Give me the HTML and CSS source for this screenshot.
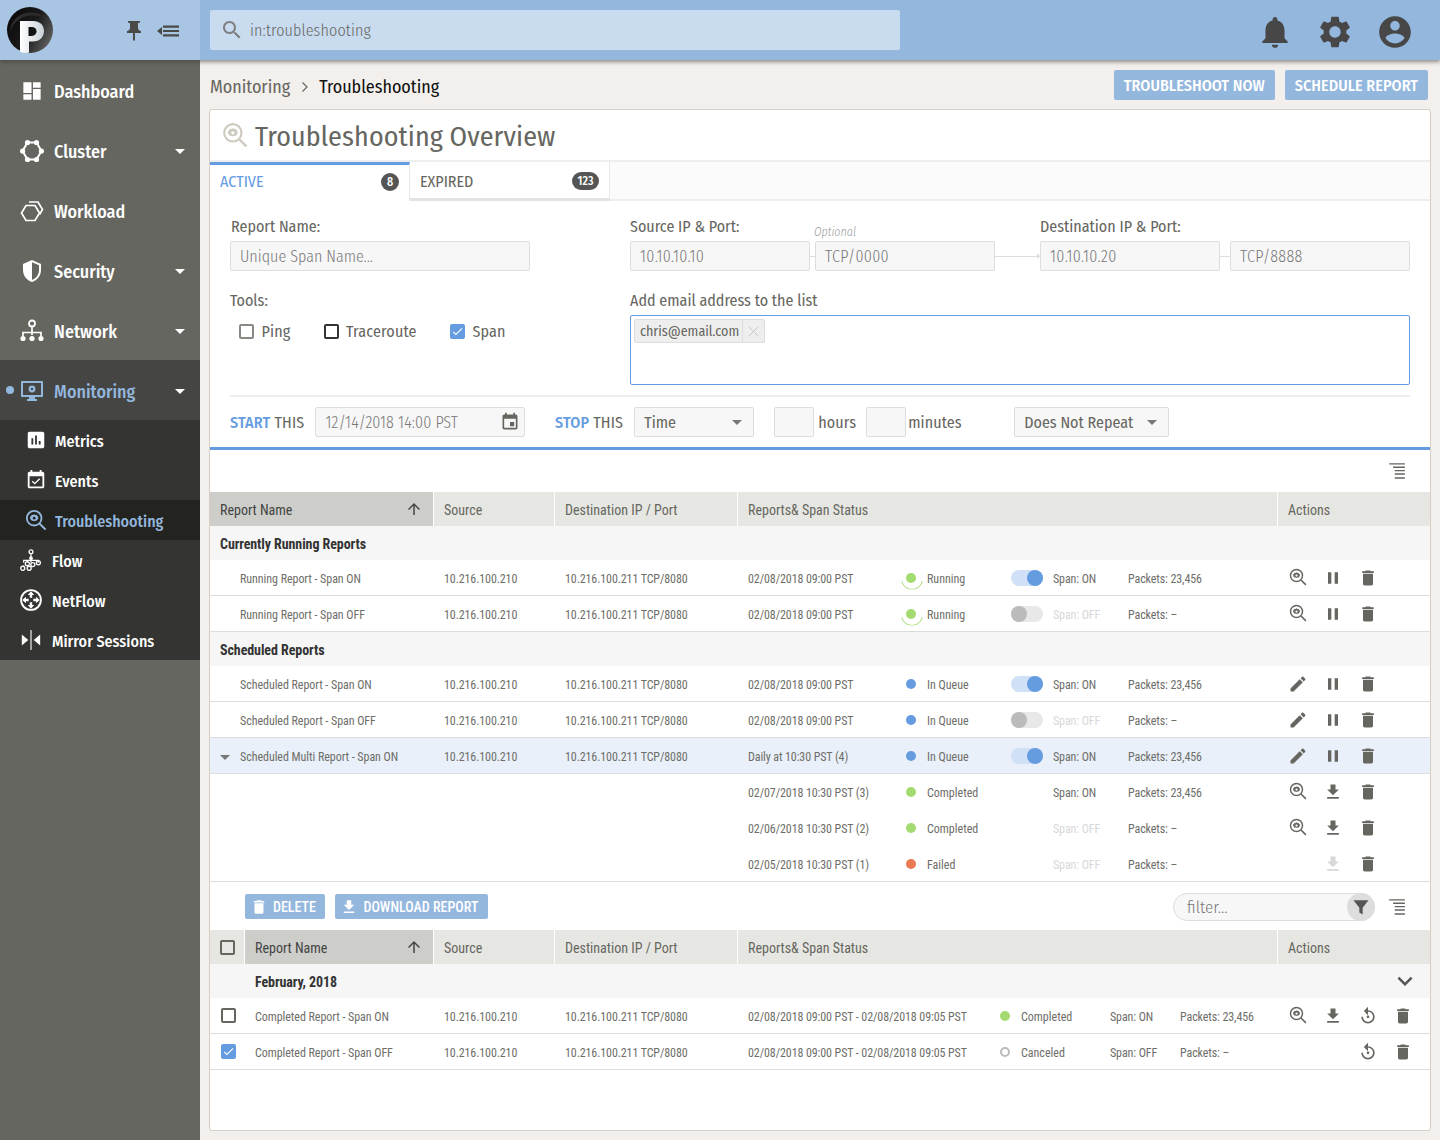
FILE: index.html
```html
<!DOCTYPE html>
<html lang="en">
<head>
<meta charset="utf-8">
<title>Troubleshooting Overview</title>
<link rel="stylesheet" href="styles.css">
</head>
<body>
<svg class="sprite" aria-hidden="true">
  <symbol id="i-pin" viewBox="0 0 24 24"><path d="M16 9V4h1c.55 0 1-.45 1-1s-.45-1-1-1H7c-.55 0-1 .45-1 1s.45 1 1 1h1v5c0 1.66-1.34 3-3 3v2h5.97v7l1 1 1-1v-7H19v-2c-1.66 0-3-1.34-3-3z"/></symbol>
  <symbol id="i-collapse" viewBox="0 0 24 24"><path d="M1 12l5-4v8zM7 6.500h16v2.200H7zM7 10.900h16v2.200H7zM7 15.300h16v2.200H7z"/></symbol>
  <symbol id="i-search" viewBox="0 0 24 24"><path d="M15.5 14h-.79l-.28-.27C15.41 12.59 16 11.11 16 9.5 16 5.91 13.09 3 9.5 3S3 5.91 3 9.5 5.91 16 9.5 16c1.61 0 3.09-.59 4.23-1.57l.27.28v.79l5 4.99L20.49 19l-4.99-5zm-6 0C7.01 14 5 11.99 5 9.5S7.01 5 9.5 5 14 7.01 14 9.5 11.99 14 9.5 14z"/></symbol>
  <symbol id="i-bell" viewBox="0 0 24 24"><path d="M12 22c1.1 0 2-.9 2-2h-4c0 1.1.89 2 2 2zm6-6v-5c0-3.07-1.64-5.64-4.5-6.32V4c0-.83-.67-1.5-1.5-1.5s-1.5.67-1.5 1.5v.68C7.63 5.36 6 7.92 6 11v5l-2 2v1h16v-1l-2-2z"/></symbol>
  <symbol id="i-gear" viewBox="0 0 24 24"><path d="M19.14 12.94c.04-.3.06-.61.06-.94 0-.32-.02-.64-.07-.94l2.03-1.58c.18-.14.23-.41.12-.61l-1.92-3.32c-.12-.22-.37-.29-.59-.22l-2.39.96c-.5-.38-1.03-.7-1.62-.94l-.36-2.54c-.04-.24-.24-.41-.48-.41h-3.84c-.24 0-.43.17-.47.41l-.36 2.54c-.59.24-1.13.57-1.62.94l-2.39-.96c-.22-.08-.47 0-.59.22L2.74 8.87c-.12.21-.08.47.12.61l2.03 1.58c-.05.3-.09.63-.09.94s.02.64.07.94l-2.03 1.58c-.18.14-.23.41-.12.61l1.92 3.32c.12.22.37.29.59.22l2.39-.96c.5.38 1.03.7 1.62.94l.36 2.54c.05.24.24.41.48.41h3.84c.24 0 .44-.17.47-.41l.36-2.54c.59-.24 1.13-.56 1.62-.94l2.39.96c.22.08.47 0 .59-.22l1.92-3.32c.12-.22.07-.47-.12-.61l-2.01-1.58zM12 15.6c-1.98 0-3.6-1.62-3.6-3.6s1.62-3.6 3.6-3.6 3.6 1.62 3.6 3.6-1.62 3.6-3.6 3.6z"/></symbol>
  <symbol id="i-account" viewBox="0 0 24 24"><path d="M12 2C6.48 2 2 6.48 2 12s4.48 10 10 10 10-4.48 10-10S17.52 2 12 2zm0 3c1.66 0 3 1.34 3 3s-1.34 3-3 3-3-1.34-3-3 1.34-3 3-3zm0 14.2c-2.5 0-4.71-1.28-6-3.22.03-1.99 4-3.08 6-3.08 1.99 0 5.97 1.09 6 3.08-1.29 1.94-3.5 3.22-6 3.22z"/></symbol>
  <symbol id="i-dashboard" viewBox="-2.500 -2.500 25 25"><path d="M1 1h8.500v11H1zM1 13.500h8.500V19H1zM11 1h8v5.500h-8zM11 8h8v11h-8z"/></symbol>
  <symbol id="i-cluster" viewBox="0 0 24 24"><path fill="none" stroke="currentColor" stroke-width="2" d="M7.500 3.500h9l5 8.500-5 8.500h-9L2.500 12z"/><circle cx="7.500" cy="3.500" r="2.600"/><circle cx="16.500" cy="3.500" r="2.600"/><circle cx="21.400" cy="12" r="2.600"/><circle cx="16.500" cy="20.500" r="2.600"/><circle cx="7.500" cy="20.500" r="2.600"/><circle cx="2.600" cy="12" r="2.600"/></symbol>
  <symbol id="i-workload" viewBox="0 0 24 24"><path fill="none" stroke="currentColor" stroke-width="1.700" d="M6 6.500h9l4.500 7.500-4.500 7.500H6L1.500 14zM9 3h9l4.500 7.500-3 5"/></symbol>
  <symbol id="i-shield" viewBox="0 0 24 24"><path d="M12 1L3 5v6c0 5.550 3.840 10.740 9 12 5.160-1.260 9-6.450 9-12V5l-9-4zm0 2.200l7 3.100V11c0 4.500-2.900 8.700-7 9.900z"/></symbol>
  <symbol id="i-network" viewBox="0 0 24 24"><path fill="none" stroke="currentColor" stroke-width="1.700" d="M12 8v8M3 17v-3.500h18V17"/><circle cx="12" cy="4.500" r="3" fill="none" stroke="currentColor" stroke-width="1.800"/><circle cx="3" cy="19.500" r="2.600"/><circle cx="12" cy="19.500" r="2.600"/><circle cx="21" cy="19.500" r="2.600"/></symbol>
  <symbol id="i-monitor" viewBox="0 0 24 24"><path d="M2 2h20c.6 0 1 .4 1 1v14c0 .6-.4 1-1 1h-7v2h2v2H7v-2h2v-2H2c-.6 0-1-.4-1-1V3c0-.6.400-1 1-1zm1 2v12h18V4z"/><circle cx="12" cy="10" r="3.400"/><circle cx="12" cy="10" r="1.200" fill="#454543"/></symbol>
  <symbol id="i-assess" viewBox="0 0 24 24"><path d="M19 3H5c-1.100 0-2 .9-2 2v14c0 1.100.9 2 2 2h14c1.100 0 2-.9 2-2V5c0-1.100-.9-2-2-2zM9 17H7v-7h2v7zm4 0h-2V7h2v10zm4 0h-2v-4h2v4z"/></symbol>
  <symbol id="i-event" viewBox="0 0 24 24"><path d="M16.530 11.060L15.470 10l-4.880 4.880-2.120-2.120-1.060 1.060L10.590 17l5.940-5.940zM19 3h-1V1h-2v2H8V1H6v2H5c-1.110 0-1.990.9-1.990 2L3 19c0 1.100.89 2 2 2h14c1.100 0 2-.9 2-2V5c0-1.100-.9-2-2-2zm0 16H5V8h14v11z"/></symbol>
  <symbol id="i-trouble" viewBox="0 0 24 24"><circle cx="10" cy="10" r="8" fill="none" stroke="currentColor" stroke-width="2"/><path fill="none" stroke="currentColor" stroke-width="2.200" d="M16 16l6.500 6.500"/><path d="M10 5.800l1.200.7 1.400-.2.700 1.200 1.200.7-.2 1.400.2 1.400-1.200.7-.7 1.200-1.400-.2-1.200.7-1.200-.7-1.400.2-.7-1.200-1.200-.7.2-1.400-.2-1.400 1.200-.7.7-1.200 1.400.2z"/><circle cx="10" cy="10" r="1.500" fill="var(--hole,#fff)"/></symbol>
  <symbol id="i-flow" viewBox="0 0 24 24"><path fill="none" stroke="currentColor" stroke-width="1.300" d="M12 5v4M4 15v-2.500h8M12 9v6M12 12.500h8V15M8 15v-2.500M4 18v1"/><circle cx="12" cy="3" r="2.100" fill="none" stroke="currentColor" stroke-width="1.400"/><circle cx="12" cy="10" r="2" /><circle cx="20" cy="15" r="2.200" fill="none" stroke="currentColor" stroke-width="1.400"/><circle cx="8" cy="16" r="2.200" fill="none" stroke="currentColor" stroke-width="1.400"/><circle cx="14" cy="17" r="2.200" fill="none" stroke="currentColor" stroke-width="1.400"/><circle cx="3" cy="21" r="2.200" fill="none" stroke="currentColor" stroke-width="1.400"/><circle cx="10" cy="21" r="2.200" fill="none" stroke="currentColor" stroke-width="1.400"/></symbol>
  <symbol id="i-netflow" viewBox="0 0 24 24"><circle cx="12" cy="12" r="10.800" fill="none" stroke="currentColor" stroke-width="2"/><path d="M12 2.500l3.500 4h-2.200v3h-2.600v-3H8.500zM12 21.500l3.500-4h-2.200v-3h-2.600v3H8.500zM2.500 12l4-3.500v2.200h3v2.600h-3v2.200zM21.500 12l-4-3.500v2.200h-3v2.600h3v2.200z"/></symbol>
  <symbol id="i-mirror" viewBox="0 0 24 24"><path d="M2 6l7 6-7 6zM22 6l-7 6 7 6zM11.400 1h1.200v22h-1.200z"/></symbol>
  <symbol id="i-date" viewBox="0 0 24 24"><path d="M17 12h-5v5h5v-5zM16 1v2H8V1H6v2H5c-1.110 0-1.990.9-1.990 2L3 19c0 1.100.89 2 2 2h14c1.100 0 2-.9 2-2V5c0-1.100-.9-2-2-2h-1V1h-2zm3 18H5V8h14v11z"/></symbol>
  <symbol id="i-rows" viewBox="0 0 16 16"><path d="M1 1h14v1.300H1zM4.500 4h10.500v1.300H4.500zM6 7h9v1.300H6zM6 10h9v1.300H6zM6 13.500h9v1.300H6z"/></symbol>
  <symbol id="i-up" viewBox="0 0 24 24"><path d="M4 12l1.410 1.410L11 7.830V20h2V7.830l5.580 5.590L20 12l-8-8-8 8z"/></symbol>
  <symbol id="i-pause" viewBox="0 0 24 24"><path d="M6 19h4V5H6v14zm8-14v14h4V5h-4z"/></symbol>
  <symbol id="i-trash" viewBox="0 0 24 24"><path d="M6 19c0 1.100.9 2 2 2h8c1.100 0 2-.9 2-2V7H6v12zM19 4h-3.500l-1-1h-5l-1 1H5v2h14V4z"/></symbol>
  <symbol id="i-edit" viewBox="0 0 24 24"><path d="M3 17.250V21h3.750L17.810 9.940l-3.750-3.750L3 17.250zM20.710 7.040c.39-.39.39-1.020 0-1.410l-2.340-2.340c-.39-.39-1.020-.39-1.410 0l-1.830 1.830 3.750 3.750 1.830-1.830z"/></symbol>
  <symbol id="i-down" viewBox="0 0 24 24"><path d="M19 9h-4V3H9v6H5l7 7 7-7zM5 18v2h14v-2H5z"/></symbol>
  <symbol id="i-replay" viewBox="0 0 24 24"><path d="M12 5V1L7 6l5 5V7c3.310 0 6 2.690 6 6s-2.690 6-6 6-6-2.690-6-6H4c0 4.420 3.580 8 8 8s8-3.580 8-8-3.580-8-8-8z"/><circle cx="12" cy="13" r="1.600"/></symbol>
  <symbol id="i-funnel" viewBox="0 0 24 24"><path d="M3 4h18l-7 9v8l-4-2.500V13z"/></symbol>
  <symbol id="i-more" viewBox="0 0 24 24"><path d="M16.590 8.590L12 13.170 7.410 8.590 6 10l6 6 6-6z"/></symbol>
  <symbol id="i-check" viewBox="0 0 24 24"><path d="M9 16.200L4.800 12l-1.400 1.400L9 19 21 7l-1.400-1.400z"/></symbol>
  <symbol id="i-crumb" viewBox="0 0 10 12"><path fill="none" stroke="currentColor" stroke-width="1.200" d="M2.500 1.500L7 6l-4.500 4.500"/></symbol>
  <symbol id="i-x" viewBox="0 0 12 12"><path fill="none" stroke="currentColor" stroke-width="1" d="M1 1l10 10M11 1L1 11"/></symbol>
</svg>

<header class="topbar">
  <div class="brand">
    <svg class="logo" viewBox="0 0 46 46" aria-label="Logo">
      <defs>
        <linearGradient id="lg" x1=".1" y1=".3" x2=".95" y2=".75"><stop offset="0" stop-color="#0c0c0c"/><stop offset=".5" stop-color="#1c1c1c"/><stop offset="1" stop-color="#5e5e5e"/></linearGradient>
        <linearGradient id="lp" x1="0" y1="0" x2="1" y2="0"><stop offset="0" stop-color="#fff"/><stop offset="1" stop-color="#c8d0d8"/></linearGradient>
      </defs>
      <circle cx="23" cy="23" r="23" fill="url(#lg)"/>
      <path fill="#2c2c2c" d="M3 26C3 14 12 5.500 24 5.500c6 0 11 2 15 6-4-2-8-3-13-3C14 8.500 5 16 3 26z"/>
      <path fill="url(#lp)" d="M13 14h13c7 0 11 4.200 11 10s-4 10.500-11 10.500h-4V45.800c-3.200.4-6.200 0-9-1.100z"/>
      <path fill="#111" d="M21.500 20h3.300c2.900 0 4.700 1.800 4.700 4.300s-1.800 4.700-4.700 4.700h-3.300z"/>
    </svg>
    <svg class="ico brand-pin"><use href="#i-pin"/></svg>
    <svg class="ico brand-collapse"><use href="#i-collapse"/></svg>
  </div>
  <div class="topmain">
    <div class="search">
      <svg class="ico search-ico"><use href="#i-search"/></svg>
      <span>in:troubleshooting</span>
    </div>
    <div class="top-icons">
      <svg class="ico top-ico"><use href="#i-bell"/></svg>
      <svg class="ico top-ico"><use href="#i-gear"/></svg>
      <svg class="ico top-ico"><use href="#i-account"/></svg>
    </div>
  </div>
</header>

<div class="shell">
  <nav class="sidebar">
    <a class="nav"><svg class="ico nav-ico"><use href="#i-dashboard"/></svg><span>Dashboard</span></a>
    <a class="nav"><svg class="ico nav-ico"><use href="#i-cluster"/></svg><span>Cluster</span><i class="caret"></i></a>
    <a class="nav"><svg class="ico nav-ico"><use href="#i-workload"/></svg><span>Workload</span></a>
    <a class="nav"><svg class="ico nav-ico"><use href="#i-shield"/></svg><span>Security</span><i class="caret"></i></a>
    <a class="nav"><svg class="ico nav-ico"><use href="#i-network"/></svg><span>Network</span><i class="caret"></i></a>
    <a class="nav nav-open"><b class="bullet"></b><svg class="ico nav-ico"><use href="#i-monitor"/></svg><span>Monitoring</span><i class="caret"></i></a>
    <div class="subnav">
      <a class="sub sub-in"><svg class="ico sub-ico"><use href="#i-assess"/></svg><span>Metrics</span></a>
      <a class="sub sub-in"><svg class="ico sub-ico"><use href="#i-event"/></svg><span>Events</span></a>
      <a class="sub sub-in sub-active"><svg class="ico sub-ico"><use href="#i-trouble"/></svg><span>Troubleshooting</span></a>
      <a class="sub"><svg class="ico sub-ico"><use href="#i-flow"/></svg><span>Flow</span></a>
      <a class="sub"><svg class="ico sub-ico"><use href="#i-netflow"/></svg><span>NetFlow</span></a>
      <a class="sub"><svg class="ico sub-ico"><use href="#i-mirror"/></svg><span>Mirror Sessions</span></a>
    </div>
  </nav>

  <main class="main">
    <div class="crumbs">
      <div class="crumb-text"><span>Monitoring</span><svg class="ico crumb-sep"><use href="#i-crumb"/></svg><strong>Troubleshooting</strong></div>
      <div class="crumb-btns"><button class="btn">TROUBLESHOOT NOW</button><button class="btn">SCHEDULE REPORT</button></div>
    </div>

    <section class="card">
      <h1 class="title"><svg class="ico title-ico"><use href="#i-trouble"/></svg>Troubleshooting Overview</h1>
      <div class="tabs">
        <div class="tab tab-on"><span>ACTIVE</span><em class="badge">8</em></div>
        <div class="tab"><span>EXPIRED</span><em class="badge badge-w">123</em></div>
      </div>

      <form class="form">
        <div class="form-top">
          <div class="col-left">
            <label class="lbl">Report Name:</label>
            <div class="field name-field">Unique Span Name...</div>
            <label class="lbl lbl-tools">Tools:</label>
            <div class="tools">
              <span class="tool tool-ping"><i class="box"></i>Ping</span>
              <span class="tool tool-trace"><i class="box box-dark"></i>Traceroute</span>
              <span class="tool"><i class="box box-on"><svg class="ico"><use href="#i-check"/></svg></i>Span</span>
            </div>
          </div>
          <div class="col-right">
            <div class="ports">
              <label class="lbl">Source IP &amp; Port:</label><span></span><span class="opt">Optional</span><span></span><label class="lbl">Destination IP &amp; Port:</label><span></span><span></span>
              <div class="field">10.10.10.10</div><i class="link"></i><div class="field">TCP/0000</div><i class="link link-arrow"></i><div class="field">10.10.10.20</div><i class="link"></i><div class="field">TCP/8888</div>
            </div>
            <label class="lbl lbl-tools">Add email address to the list</label>
            <div class="email"><span class="chip"><span class="chip-t">chris@email.com</span><span class="chip-x" aria-label="Remove"><svg class="ico"><use href="#i-x"/></svg></span></span></div>
          </div>
        </div>
        <hr class="rule">
        <div class="when">
          <span class="when-l"><b>START</b> THIS</span>
          <div class="field date-f">12/14/2018 14:00 PST<svg class="ico date-ico"><use href="#i-date"/></svg></div>
          <span class="when-l stop-l"><b>STOP</b> THIS</span>
          <div class="field sel time-s">Time<i class="caret caret-g"></i></div>
          <div class="field small-f"></div><span class="unit">hours</span>
          <div class="field small-f small-m"></div><span class="unit unit-m">minutes</span>
          <div class="field sel rep-s">Does Not Repeat<i class="caret caret-g"></i></div>
        </div>
      </form>

      <div class="tool-row"><svg class="ico rows-ico"><use href="#i-rows"/></svg></div>

      <div class="thead t-a">
        <div class="th th-sort">Report Name<svg class="ico sort-ico"><use href="#i-up"/></svg></div>
        <div class="th">Source</div>
        <div class="th">Destination IP / Port</div>
        <div class="th">Reports&amp; Span Status</div>
        <div class="th">Actions</div>
      </div>

      <div class="group">Currently Running Reports</div>
      <div class="row r-a">
        <div class="c-name">Running Report - Span ON</div><div>10.216.100.210</div><div>10.216.100.211 TCP/8080</div><div>02/08/2018 09:00 PST</div>
        <div class="st"><i class="dot green run"></i>Running</div><div><i class="tog on"></i></div><div>Span: ON</div><div>Packets: 23,456</div>
        <div class="acts"><svg class="ico act act-z"><use href="#i-trouble"/></svg><svg class="ico act"><use href="#i-pause"/></svg><svg class="ico act"><use href="#i-trash"/></svg></div>
      </div>
      <div class="row r-a">
        <div class="c-name">Running Report - Span OFF</div><div>10.216.100.210</div><div>10.216.100.211 TCP/8080</div><div>02/08/2018 09:00 PST</div>
        <div class="st"><i class="dot green run"></i>Running</div><div><i class="tog"></i></div><div class="off">Span: OFF</div><div>Packets: –</div>
        <div class="acts"><svg class="ico act act-z"><use href="#i-trouble"/></svg><svg class="ico act"><use href="#i-pause"/></svg><svg class="ico act"><use href="#i-trash"/></svg></div>
      </div>

      <div class="group">Scheduled Reports</div>
      <div class="row r-a">
        <div class="c-name">Scheduled Report - Span ON</div><div>10.216.100.210</div><div>10.216.100.211 TCP/8080</div><div>02/08/2018 09:00 PST</div>
        <div class="st"><i class="dot blue"></i>In Queue</div><div><i class="tog on"></i></div><div>Span: ON</div><div>Packets: 23,456</div>
        <div class="acts"><svg class="ico act"><use href="#i-edit"/></svg><svg class="ico act"><use href="#i-pause"/></svg><svg class="ico act"><use href="#i-trash"/></svg></div>
      </div>
      <div class="row r-a">
        <div class="c-name">Scheduled Report - Span OFF</div><div>10.216.100.210</div><div>10.216.100.211 TCP/8080</div><div>02/08/2018 09:00 PST</div>
        <div class="st"><i class="dot blue"></i>In Queue</div><div><i class="tog"></i></div><div class="off">Span: OFF</div><div>Packets: –</div>
        <div class="acts"><svg class="ico act"><use href="#i-edit"/></svg><svg class="ico act"><use href="#i-pause"/></svg><svg class="ico act"><use href="#i-trash"/></svg></div>
      </div>
      <div class="row r-a row-sel">
        <div class="c-name c-exp"><i class="caret caret-g exp"></i>Scheduled Multi Report - Span ON</div><div>10.216.100.210</div><div>10.216.100.211 TCP/8080</div><div>Daily at 10:30 PST (4)</div>
        <div class="st"><i class="dot blue"></i>In Queue</div><div><i class="tog on"></i></div><div>Span: ON</div><div>Packets: 23,456</div>
        <div class="acts"><svg class="ico act"><use href="#i-edit"/></svg><svg class="ico act"><use href="#i-pause"/></svg><svg class="ico act"><use href="#i-trash"/></svg></div>
      </div>
      <div class="row r-a row-flat">
        <div></div><div></div><div></div><div>02/07/2018 10:30 PST (3)</div>
        <div class="st"><i class="dot green"></i>Completed</div><div></div><div>Span: ON</div><div>Packets: 23,456</div>
        <div class="acts"><svg class="ico act act-z"><use href="#i-trouble"/></svg><svg class="ico act"><use href="#i-down"/></svg><svg class="ico act"><use href="#i-trash"/></svg></div>
      </div>
      <div class="row r-a row-flat">
        <div></div><div></div><div></div><div>02/06/2018 10:30 PST (2)</div>
        <div class="st"><i class="dot green"></i>Completed</div><div></div><div class="off">Span: OFF</div><div>Packets: –</div>
        <div class="acts"><svg class="ico act act-z"><use href="#i-trouble"/></svg><svg class="ico act"><use href="#i-down"/></svg><svg class="ico act"><use href="#i-trash"/></svg></div>
      </div>
      <div class="row r-a">
        <div></div><div></div><div></div><div>02/05/2018 10:30 PST (1)</div>
        <div class="st"><i class="dot red"></i>Failed</div><div></div><div class="off">Span: OFF</div><div>Packets: –</div>
        <div class="acts"><span class="act"></span><svg class="ico act act-off"><use href="#i-down"/></svg><svg class="ico act"><use href="#i-trash"/></svg></div>
      </div>

      <div class="bulk">
        <button class="btn btn-s"><svg class="ico"><use href="#i-trash"/></svg>DELETE</button>
        <button class="btn btn-s"><svg class="ico"><use href="#i-down"/></svg>DOWNLOAD REPORT</button>
        <div class="filter"><span>filter...</span><i class="funnel"><svg class="ico"><use href="#i-funnel"/></svg></i></div>
        <svg class="ico rows-ico"><use href="#i-rows"/></svg>
      </div>

      <div class="thead t-b">
        <div class="th th-check"><i class="box box-dim"></i></div>
        <div class="th th-sort">Report Name<svg class="ico sort-ico"><use href="#i-up"/></svg></div>
        <div class="th">Source</div>
        <div class="th">Destination IP / Port</div>
        <div class="th">Reports&amp; Span Status</div>
        <div class="th">Actions</div>
      </div>
      <div class="group group-b">February, 2018<svg class="ico chev"><use href="#i-more"/></svg></div>
      <div class="row r-b">
        <div class="c-check"><i class="box box-dim"></i></div><div class="c-n2">Completed Report - Span ON</div><div>10.216.100.210</div><div>10.216.100.211 TCP/8080</div><div>02/08/2018 09:00 PST - 02/08/2018 09:05 PST</div>
        <div class="st st-b"><i class="dot green"></i>Completed</div><div>Span: ON</div><div>Packets: 23,456</div>
        <div class="acts"><svg class="ico act act-z"><use href="#i-trouble"/></svg><svg class="ico act"><use href="#i-down"/></svg><svg class="ico act"><use href="#i-replay"/></svg><svg class="ico act"><use href="#i-trash"/></svg></div>
      </div>
      <div class="row r-b">
        <div class="c-check"><i class="box box-on"><svg class="ico"><use href="#i-check"/></svg></i></div><div class="c-n2">Completed Report - Span OFF</div><div>10.216.100.210</div><div>10.216.100.211 TCP/8080</div><div>02/08/2018 09:00 PST - 02/08/2018 09:05 PST</div>
        <div class="st st-b"><i class="dot ring"></i>Canceled</div><div>Span: OFF</div><div>Packets: –</div>
        <div class="acts"><span class="act"></span><span class="act"></span><svg class="ico act"><use href="#i-replay"/></svg><svg class="ico act"><use href="#i-trash"/></svg></div>
      </div>
    </section>
  </main>
</div>
</body>
</html>
```

FILE: styles.css
```css
:root {
  --ink: #666660;
  --blue: #659ce0;
  --soft-blue: #94b7de;
  --ui: "Fira Sans Condensed", "Fira Sans", Lato, sans-serif;
  --cond: "Roboto Condensed", Roboto, sans-serif;
}
* { box-sizing: border-box; }
html, body { margin: 0; height: 1140px; overflow: hidden; }
body { background: #f3efec; font-family: var(--ui); color: var(--ink); font-size: 16px; }
.sprite { display: none; }
.ico { display: block; fill: currentColor; flex: none; }
i, em { font-style: normal; }

/* top bar */
.topbar { display: flex; height: 60px; position: relative; z-index: 2; box-shadow: 0 2px 4px rgba(60,55,50,.55); }
.brand { width: 200px; background: #a9c5e4; display: flex; align-items: center; padding-left: 7px; color: #4a4a47; }
.logo { width: 46px; height: 46px; }
.brand-pin { width: 24px; height: 24px; margin: 2px 0 0 69px; }
.brand-collapse { width: 24px; height: 24px; margin: 2px 0 0 10px; }
.topmain { flex: 1; background: #94b7de; display: flex; align-items: center; padding-left: 10px; }
.search { width: 690px; height: 40px; background: #c9dbef; border-radius: 2px; display: flex; align-items: center; padding-left: 10px; color: #666660; font-size: 16px; font-weight: 300; letter-spacing: .15px; }
.search-ico { width: 24px; height: 24px; margin-right: 6px; color: #7d7f80; }
.top-icons { margin-left: auto; display: flex; gap: 22px; padding: 4px 26px 0 0; color: #474747; }
.top-ico { width: 38px; height: 38px; }

/* sidebar */
.shell { display: flex; height: 1080px; }
.sidebar { width: 200px; background: #666660; flex: none; }
.nav { height: 60px; display: flex; align-items: center; padding: 4px 0 0 20px; color: #fff; font-size: 18px; font-weight: 500; position: relative; }
.nav-ico { width: 24px; height: 24px; margin: -2px 10px 0 0; }
.nav-open { background: #454543; color: #94b7de; }
.bullet { position: absolute; left: 6px; top: 26px; width: 8px; height: 8px; border-radius: 50%; background: #94b7de; }
.caret { display: block; width: 0; height: 0; border: 5px solid transparent; border-top-color: #fff; border-bottom-width: 0; }
.nav .caret { position: absolute; left: 175px; top: 29px; }
.subnav { background: #343432; }
.sub { height: 40px; display: flex; align-items: center; padding: 3px 0 0 20px; color: #fff; font-size: 16px; font-weight: 500; }
.sub-ico { width: 22px; height: 22px; margin: -3px 10px 0 0; }
.sub-in { padding-left: 25px; }
.sub-in .sub-ico { margin-right: 8px; }
.sub-active { background: #232320; color: #94b7de; --hole: #232320; }

/* main */
.main { flex: 1; padding: 0 9px 9px; display: flex; flex-direction: column; min-width: 0; }
.crumbs { height: 49px; display: flex; align-items: flex-start; justify-content: space-between; padding: 10px 3px 0 1px; }
.crumb-text { font-size: 18px; color: #666660; display: flex; align-items: center; height: 33px; }
.crumb-sep { width: 10px; height: 12px; margin: 1px 9px 0 10px; }
.crumb-text strong { font-weight: 400; color: #111; }
.crumb-btns { display: flex; gap: 10px; }
.btn { height: 30px; border: 0; border-radius: 2px; background: var(--soft-blue); color: #fff; padding: 0 10px; font-family: var(--ui); font-size: 16px; font-weight: 500; letter-spacing: .06px; display: flex; align-items: center; }

.card { flex: 1; background: #fff; border: 1px solid #d5cfc6; border-radius: 3px; }
.title { margin: 0; height: 52px; border-bottom: 2px solid #eee; display: flex; align-items: center; padding: 2px 0 0 12px; font-weight: 400; font-size: 28px; letter-spacing: .08px; color: #666660; }
.title-ico { width: 26px; height: 26px; margin: -2px 7px 0 0; color: #cfcabf; }
.tabs { height: 39px; display: flex; background: #fbfbfb; border-bottom: 2px solid #eee; }
.tab { width: 200px; height: 39px; background: #fff; display: flex; align-items: center; justify-content: space-between; padding: 2px 10px 0; font-size: 16px; border-bottom: 3px solid #e3e3e3; border-right: 1px solid #e8e8e8; }
.tab-on { color: var(--blue); border-bottom: 0; border-top: 3px solid var(--blue); padding: 0 10px 3px; }
.badge { min-width: 18px; height: 18px; border-radius: 9px; background: #555; color: #fff; font-size: 12px; font-weight: 500; display: flex; align-items: center; justify-content: center; padding: 0 4px; }
.badge-w { min-width: 27px; }

/* form */
.form { padding: 16px 20px 0; border-bottom: 3px solid var(--blue); height: 249px; }
.form-top { display: flex; }
.col-left { width: 400px; }
.col-right { width: 780px; }
.lbl { display: block; height: 20px; line-height: 20px; font-size: 16px; margin-bottom: 4px; }
.col-left > .lbl:first-child { padding-left: 1px; }
.field { height: 30px; background: #f7f7f7; border: 1px solid #ddd; border-radius: 2px; display: flex; align-items: center; padding-left: 9px; font-size: 16px; font-weight: 300; color: #777; }
.name-field { width: 300px; }
.ports .field { letter-spacing: .3px; }
.lbl-tools { margin-top: 20px; }
.tools { display: flex; padding-left: 9px; height: 32px; align-items: center; }
.tool { display: flex; align-items: center; font-size: 16px; letter-spacing: .15px; }
.tool-ping { width: 84.500px; }
.tool-trace { width: 126.500px; }
.box { display: flex; align-items: center; justify-content: center; width: 15px; height: 15px; border: 2px solid #8a8a85; border-radius: 2px; margin-right: 7.500px; flex: none; background: #fff; }
.box-dark { border-color: #333; }
.box-dim { border-color: #666660; margin: 0; background: transparent; }
.box-on { background: var(--blue); border-color: var(--blue); color: #fff; }
.box-on .ico { width: 13px; height: 13px; }
.ports { display: grid; grid-template-columns: 180px 5px 180px 45px 180px 10px 180px; }
.opt { font-size: 12px; font-style: italic; font-weight: 300; color: #999; align-self: end; padding: 0 0 2px 0; margin-left: -1px; grid-column: 3; }
.link { align-self: center; height: 1px; background: #ddd; }
.link-arrow { position: relative; }
.link-arrow::after { content: ""; position: absolute; right: 0; top: -3px; border: 3.500px solid transparent; border-left-color: #ddd; border-right-width: 0; }
.email { height: 70px; border: 1px solid var(--blue); border-radius: 2px; padding: 3px; display: flex; align-items: flex-start; }
.chip { height: 24px; background: #eee; border: 1px solid #ddd; border-radius: 2px; display: flex; align-items: center; font-size: 14px; }
.chip-t { padding: 0 3px 0 5px; }
.chip-x { width: 23px; height: 24px; border: 1px solid #ddd; border-radius: 2px; margin-right: -1px; color: #c4c4c4; display: flex; align-items: center; justify-content: center; }
.chip-x .ico { width: 11px; height: 11px; }
.rule { margin: 10px 0; border: 0; height: 2px; background: #eee; }
.when { display: flex; align-items: center; height: 30px; font-size: 16px; letter-spacing: .1px; }
.when-l { letter-spacing: .2px; }
.when-l b { color: var(--blue); font-weight: 500; }
.date-f { width: 210px; margin-left: 11px; }
.date-ico { width: 20px; height: 20px; margin-left: auto; margin-right: 4px; color: #666660; }
.stop-l { margin-left: 29.500px; }
.sel { color: #666660; font-size: 16px; font-weight: 400; letter-spacing: 0; }
.time-s { width: 120px; margin-left: 11px; }
.rep-s { width: 155px; margin-left: 8px; }
.caret-g { border-top-color: #777; margin-left: auto; margin-right: 11px; }
.small-f { width: 40px; margin-left: 20px; }
.small-m { margin-left: 0; }
.unit { margin: 0 10px 0 4px; }
.unit-m { margin-left: 2px; width: 88px; }

/* tables */
.tool-row { height: 42px; display: flex; align-items: center; justify-content: flex-end; padding-right: 24px; }
.rows-ico { width: 18px; height: 18px; }
.thead { height: 34px; display: grid; gap: 1px; font-family: var(--cond); font-size: 14px; }
.t-a { grid-template-columns: 223px 120px 182px 539px 1fr; }
.t-b { grid-template-columns: 34px 188px 120px 182px 539px 1fr; }
.th { background: #e6e7e2; display: flex; align-items: center; padding: 2px 0 0 10px; }
.th-sort { background: #cdcec9; color: #444; justify-content: space-between; padding-right: 10px; }
.th-check { padding-left: 10px; }
.th-check .box { margin-top: -2px; }
.sort-ico { width: 18px; height: 18px; margin-top: -3px; color: #444; }
.group { height: 34px; background: #f6f6f6; display: flex; align-items: center; padding: 2px 0 0 10px; font-family: var(--cond); font-size: 14px; font-weight: 700; letter-spacing: -.08px; color: #333; }
.group-b { padding-left: 45px; justify-content: space-between; padding-right: 10px; }
.chev { width: 30px; height: 30px; margin-top: -2px; color: #555; }
.row { height: 36px; display: grid; align-items: center; font-family: var(--cond); font-size: 12px; color: #6e6e69; border-bottom: 1px solid #ddd; }
.row > div { padding: 2px 0 0 10px; white-space: nowrap; letter-spacing: -.1px; }
.r-a { grid-template-columns: 224px 121px 183px 157px 116px 42px 75px 150px 1fr; }
.r-b { grid-template-columns: 35px 189px 121px 183px 252px 120px 70px 98px 1fr; }
.row-sel { background: #e9f0f9; }
.row-flat { border-bottom: 0; }
.row > .c-name { padding-left: 30px; position: relative; letter-spacing: -.05px; }
.row > .c-n2 { letter-spacing: -.05px; }
.exp { position: absolute; left: 10px; top: 7px; }
.row > .c-check { padding-left: 11px; }
.row > .c-check .box { margin-top: -2px; }
.row > .st { padding-left: 11px; display: flex; align-items: center; gap: 11px; letter-spacing: 0; }
.row > .st-b { padding-left: 10px; }
.row > div:nth-child(n+6):not(.st):not(.acts) { padding-left: 0; }
.row > .acts { padding: 0 0 0 10px; }
.dot { width: 10px; height: 10px; border-radius: 50%; position: relative; flex: none; margin-top: -2px; }
.green { background: #a4db70; }
.blue { background: var(--blue); }
.red { background: #e97853; }
.ring { border: 2px solid #bbb; }
.run::after { content: ""; position: absolute; left: -5px; top: -5px; width: 20px; height: 20px; border-radius: 50%; border: 1px solid #a4db70; clip-path: inset(62% 0 0 0); }
.row > .off { color: #d8d8d8; }
.tog { display: block; width: 32px; height: 16px; margin-top: -2px; border-radius: 8px; background: #e8e8e8; position: relative; }
.tog::after { content: ""; position: absolute; left: 0; top: 0; width: 16px; height: 16px; border-radius: 50%; background: #bbb; }
.tog.on { background: #d0e1f7; }
.tog.on::after { left: 16px; background: var(--blue); }
.acts { display: flex; gap: 15px; }
.act { width: 20px; height: 20px; display: block; flex: none; color: #666660; }
.act-z { width: 18px; height: 18px; margin: 0 1px 1px; }
.act-off { color: #d8d8d8; }

.bulk { height: 48px; display: flex; align-items: center; gap: 10px; padding: 1px 24px 0 35px; }
.btn-s { height: 25px; font-family: var(--cond); font-size: 14px; font-weight: 500; letter-spacing: 0; padding: 0 9.500px 0 5px; gap: 5px; }
.btn-s .ico { width: 18px; height: 18px; }
.filter { margin: 1px 3px 0 auto; width: 202px; height: 28px; background: #f7f7f7; border: 1px solid #ddd; border-radius: 14px; display: flex; align-items: center; justify-content: space-between; padding-left: 13px; font-size: 17px; font-weight: 300; color: #777; }
.funnel { width: 28px; height: 28px; margin-right: -1px; border-radius: 50%; background: #ddd; color: #555; display: flex; align-items: center; justify-content: center; }
.funnel .ico { width: 20px; height: 20px; }
```
